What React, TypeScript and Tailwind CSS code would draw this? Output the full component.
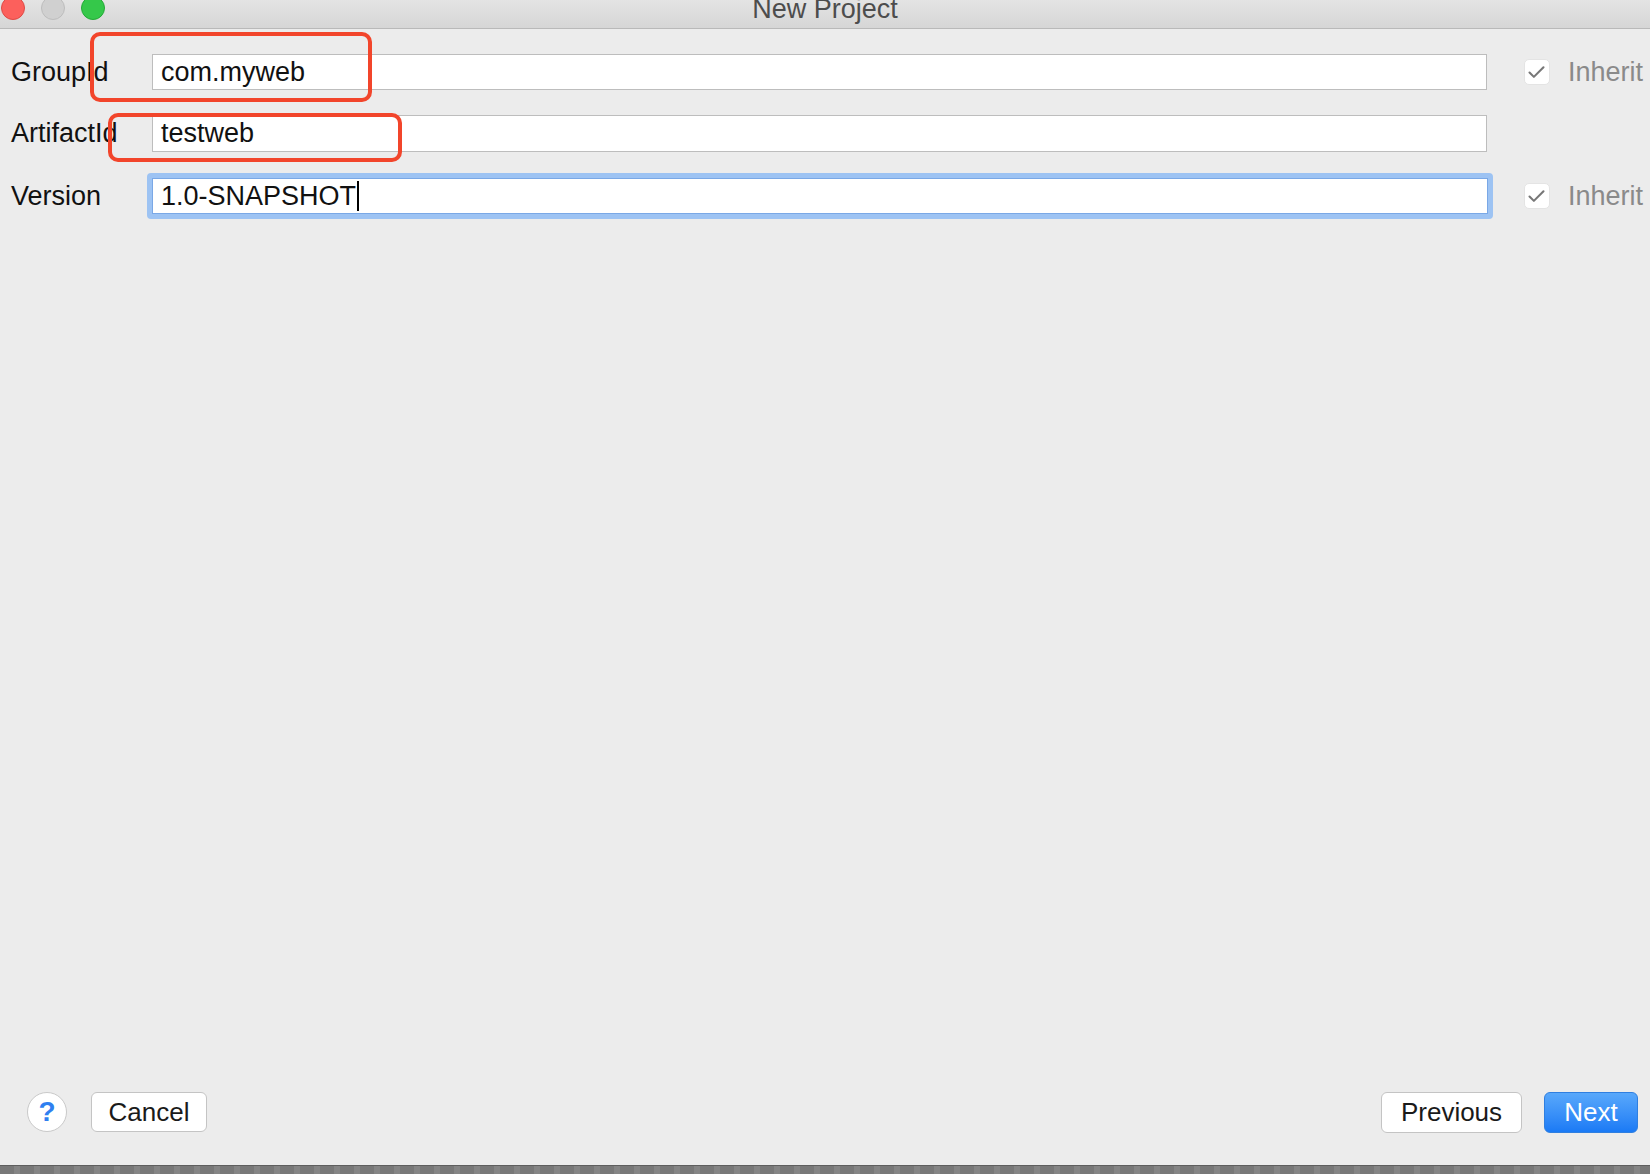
import { Check } from 'lucide-react';

const font = { fontFamily: '"Liberation Sans", Arial, sans-serif' };

function InheritBox() {
  return (
    <div className="flex items-center gap-[18px]">
      <div className="w-[26px] h-[26px] rounded-[5px] bg-white border border-[#e4e4e4] flex items-center justify-center">
        <Check className="w-[21px] h-[21px] text-[#777]" strokeWidth={2.4} />
      </div>
      <span className="text-[27px] text-[#8a8a8a] leading-none">Inherit</span>
    </div>
  );
}

export default function App() {
  return (
    <div className="w-[1650px] h-[1174px] bg-[#ececec] flex flex-col overflow-hidden relative" style={font}>
      {/* title bar, cut off at the top */}
      <div className="h-[29px] shrink-0 bg-gradient-to-b from-[#e4e4e4] to-[#d6d6d6] border-b border-[#b9b9b9] overflow-hidden relative">
        <div className="flex items-center gap-[16px] pl-[1px] -mt-[4px]">
          <div className="w-[24px] h-[24px] rounded-full bg-[#fc605c] border border-[#de4a45]" />
          <div className="w-[24px] h-[24px] rounded-full bg-[#d0d0d0] border border-[#bdbdbd]" />
          <div className="w-[24px] h-[24px] rounded-full bg-[#35c84a] border border-[#24a937]" />
        </div>
        <div className="absolute left-0 right-0 -top-[4px] text-center text-[27px] leading-[27px] text-[#4d4d4d]">
          New Project
        </div>
      </div>

      {/* form */}
      <div className="flex flex-col pt-[25px] pr-[7px]">
        <div className="flex items-center h-[36px]">
          <div className="w-[152px] pl-[11px] text-[27px] text-[#111] leading-none">GroupId</div>
          <div className="flex-1 h-[36px] bg-white border border-[#bdbdbd] flex items-center px-[8px] text-[27px] text-[#111] leading-none">
            com.myweb
          </div>
          <div className="ml-[37px]">
            <InheritBox />
          </div>
        </div>

        <div className="flex items-center h-[37px] mt-[25px]">
          <div className="w-[152px] pl-[11px] text-[27px] text-[#111] leading-none">ArtifactId</div>
          <div className="flex-1 h-[37px] bg-white border border-[#bdbdbd] flex items-center px-[8px] text-[27px] text-[#111] leading-none">
            testweb
          </div>
          <div className="ml-[37px] invisible">
            <InheritBox />
          </div>
        </div>

        <div className="flex items-center h-[46px] mt-[21px]">
          <div className="w-[147px] pl-[11px] text-[27px] text-[#111] leading-none">Version</div>
          <div className="flex-1 h-[46px] rounded-[4px] bg-[#9dc3f3] p-[5px] -mr-[6px]">
            <div className="h-full bg-white border border-[#7aa8e6] flex items-center px-[8px] text-[27px] text-[#111] leading-none">
              1.0-SNAPSHOT
              <span className="inline-block w-[2px] h-[30px] bg-black ml-[1px]" />
            </div>
          </div>
          <div className="ml-[37px]">
            <InheritBox />
          </div>
        </div>
      </div>

      <div className="flex-1" />

      {/* footer buttons */}
      <div className="flex items-center h-[42px] mb-[32px] pl-[27px] pr-[12px]">
        <div className="w-[40px] h-[40px] rounded-full bg-white border border-[#c9c9c9] flex items-center justify-center text-[28px] font-bold text-[#2f7ff0] leading-none">
          ?
        </div>
        <div className="ml-[24px] w-[116px] h-[40px] rounded-[6px] bg-white border border-[#c4c4c4] flex items-center justify-center text-[26px] text-[#1a1a1a] leading-none">
          Cancel
        </div>
        <div className="flex-1" />
        <div className="w-[141px] h-[41px] rounded-[6px] bg-white border border-[#c4c4c4] flex items-center justify-center text-[26px] text-[#1a1a1a] leading-none">
          Previous
        </div>
        <div className="ml-[22px] w-[94px] h-[41px] rounded-[6px] bg-gradient-to-b from-[#58a8fb] to-[#1a7af5] border border-[#2f7fe0] flex items-center justify-center text-[26px] text-white leading-none">
          Next
        </div>
      </div>

      {/* window bottom edge */}
      <div className="h-[9px] shrink-0 border-t border-[#5e5e5e] bg-[repeating-linear-gradient(90deg,#787878_0px,#787878_14px,#858585_14px,#858585_20px)]" />

      {/* red annotation boxes */}
      <div className="absolute left-[90px] top-[32px] w-[282px] h-[70px] border-[4px] border-[#f2452b] rounded-[10px]" />
      <div className="absolute left-[108px] top-[113px] w-[294px] h-[49px] border-[4px] border-[#f2452b] rounded-[10px]" />
    </div>
  );
}
